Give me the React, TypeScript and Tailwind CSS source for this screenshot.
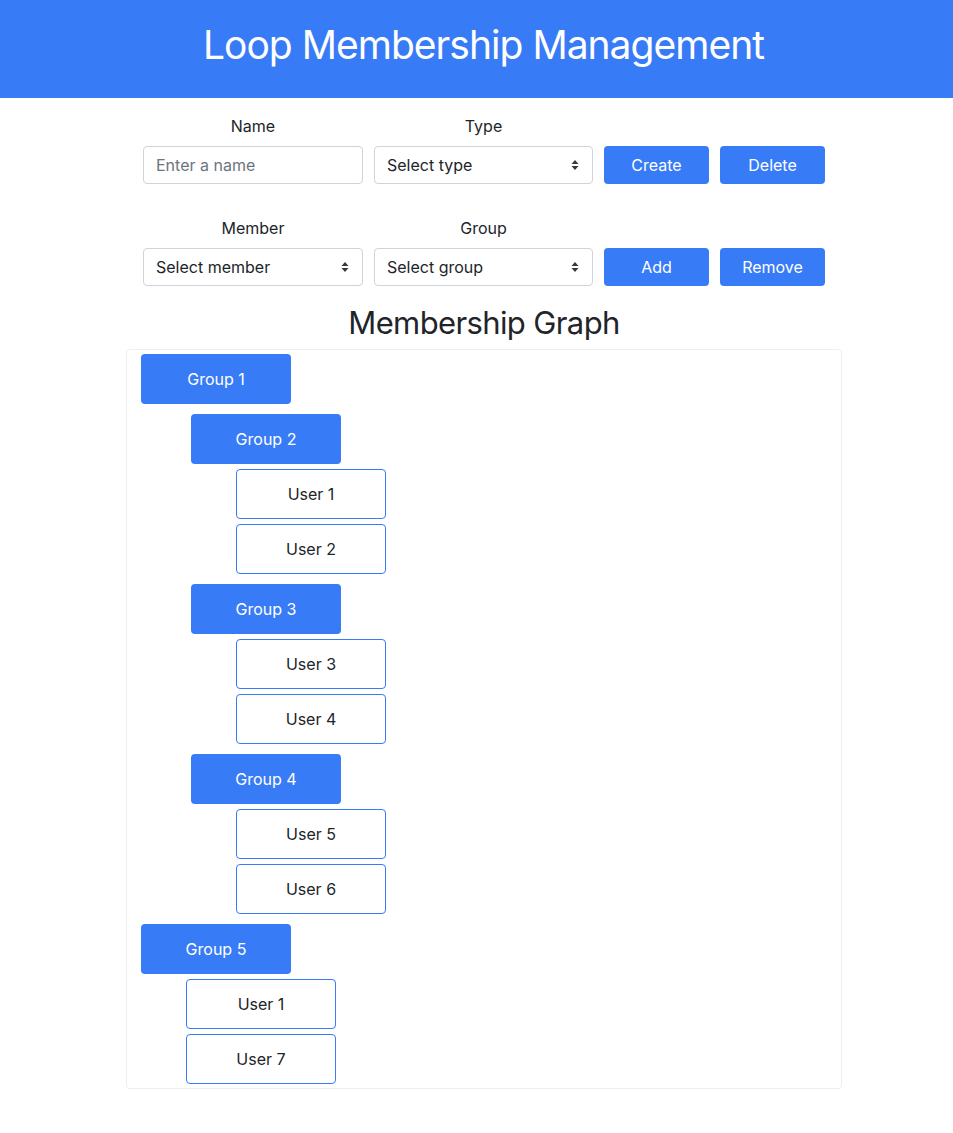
import React from 'react';

type Node = { name: string; kind: 'group' | 'user'; children?: Node[] };

const graph: Node[] = [
  {
    name: 'Group 1',
    kind: 'group',
    children: [
      { name: 'Group 2', kind: 'group', children: [{ name: 'User 1', kind: 'user' }, { name: 'User 2', kind: 'user' }] },
      { name: 'Group 3', kind: 'group', children: [{ name: 'User 3', kind: 'user' }, { name: 'User 4', kind: 'user' }] },
      { name: 'Group 4', kind: 'group', children: [{ name: 'User 5', kind: 'user' }, { name: 'User 6', kind: 'user' }] },
    ],
  },
  { name: 'Group 5', kind: 'group', children: [{ name: 'User 1', kind: 'user' }, { name: 'User 7', kind: 'user' }] },
];

const Caret = () => (
  <svg width="8" height="12" viewBox="0 0 8 12" className="absolute right-[13px] top-1/2 -translate-y-1/2">
    <path d="M4 1 L7.5 5 H0.5 Z" fill="#343a40" />
    <path d="M4 11 L7.5 7 H0.5 Z" fill="#343a40" />
  </svg>
);

const SelectBox = ({ text }: { text: string }) => (
  <div className="relative flex h-[38px] w-full items-center rounded-[4px] border border-[#ced4da] bg-white pl-[12px] text-[16px] text-[#212529]">
    {text}
    <Caret />
  </div>
);

const Field = ({ label, wide, children }: { label: string; wide?: boolean; children: React.ReactNode }) => (
  <div className={`flex flex-col items-center gap-[8px] ${wide ? 'w-[220px]' : 'w-[219px]'}`}>
    <span className="leading-[24px] text-[16px] text-[#212529]">{label}</span>
    {children}
  </div>
);

const Btn = ({ text }: { text: string }) => (
  <button className="flex h-[38px] w-[105px] items-center justify-center rounded-[4px] bg-[#387bf6] text-[16px] text-white">
    {text}
  </button>
);

const GraphNode = ({ node, first }: { node: Node; first?: boolean }) => {
  const isGroup = node.kind === 'group';
  return (
    <div className={`flex flex-col ${first ? '' : isGroup ? 'mt-[10px]' : 'mt-[5px]'}`}>
      <div
        className={
          isGroup
            ? 'flex h-[50px] w-[150px] items-center justify-center rounded-[4px] bg-[#387bf6] text-[16px] text-white'
            : 'flex h-[50px] w-[150px] items-center justify-center rounded-[4px] border border-[#387bf6] bg-white text-[16px] text-[#212529]'
        }
      >
        {node.name}
      </div>
      {node.children && (
        <div className="flex flex-col">
          {node.children.map((c, i) => (
            <div key={i} className={c.kind === 'group' ? 'ml-[50px]' : 'ml-[45px]'}>
              <GraphNode node={c} />
            </div>
          ))}
        </div>
      )}
    </div>
  );
};

export default function App() {
  return (
    <div className="min-h-[1133px] bg-white font-['Inter',sans-serif] text-[#212529]">
      <header className="h-[98px] bg-[#387bf6] pl-[14px] pt-[21px] text-center">
        <h1 className="text-[39px] leading-[48px] tracking-[-0.025em] text-white">Loop Membership Management</h1>
      </header>

      <div className="ml-[126px] w-[716px]">
        <div className="mt-[16px] flex items-end gap-[11px] pl-[17px]">
          <Field label="Name" wide>
            <div className="flex h-[38px] w-full items-center rounded-[4px] border border-[#ced4da] bg-white pl-[12px] text-[16px] text-[#6c757d]">
              Enter a name
            </div>
          </Field>
          <Field label="Type">
            <SelectBox text="Select type" />
          </Field>
          <Btn text="Create" />
          <Btn text="Delete" />
        </div>

        <div className="mt-[32px] flex items-end gap-[11px] pl-[17px]">
          <Field label="Member" wide>
            <SelectBox text="Select member" />
          </Field>
          <Field label="Group">
            <SelectBox text="Select group" />
          </Field>
          <Btn text="Add" />
          <Btn text="Remove" />
        </div>

        <h2 className="mt-[18px] mb-[7px] text-center text-[31px] leading-[38px] tracking-[-0.02em] text-[#212529]">Membership Graph</h2>

        <div className="flex flex-col rounded-[4px] border border-[#eeeeee] px-[14px] py-[4px]">
          {graph.map((n, i) => (
            <GraphNode key={i} node={n} first={i === 0} />
          ))}
        </div>
      </div>
    </div>
  );
}
